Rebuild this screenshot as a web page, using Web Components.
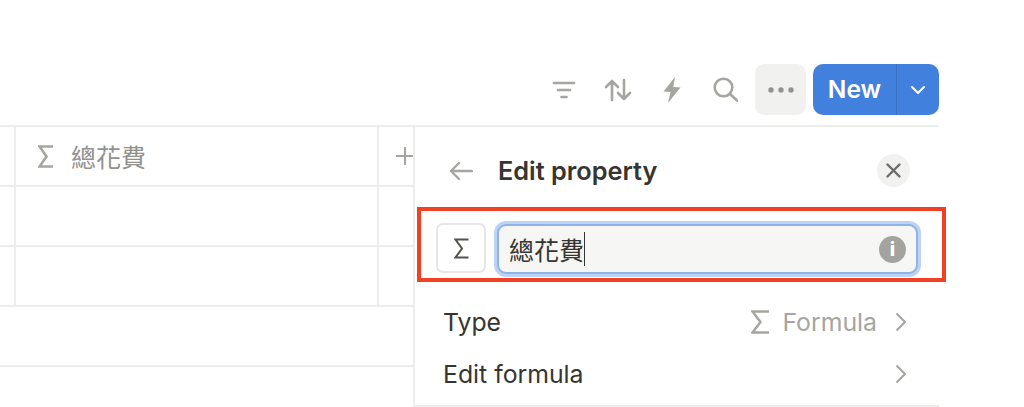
<!DOCTYPE html>
<html>
<head>
<meta charset="utf-8">
<title>Edit property</title>
<style>
  body {
    margin: 0;
    background: white;
    font-family: Inter, "Noto Sans CJK TC", sans-serif;
    overflow: hidden;
  }
</style>
</head>
<body>
<notion-page>
  <db-toolbar slot="toolbar"></db-toolbar>
  <db-table slot="table"></db-table>
  <edit-panel slot="panel"></edit-panel>
</notion-page>

<script>
// notion-page.js
class NotionPage extends HTMLElement {
  constructor(){
    super();
    const shadowRoot = this.attachShadow({mode: 'open'});
    shadowRoot.innerHTML = `
    <style>
      :host {
        display: block;
        height: 407px;
        width: 939px;
      }
      .main {
        border-top: 2px solid #ededec;
        display: grid;
        grid-template-columns: 413px 526px;
        height: 280px;
      }
    </style>
    <slot name="toolbar"></slot>
    <div class="main">
      <slot name="table"></slot>
      <slot name="panel"></slot>
    </div>
    `;
  }
}

// db-toolbar.js
class DbToolbar extends HTMLElement {
  constructor(){
    super();
    const shadowRoot = this.attachShadow({mode: 'open'});
    shadowRoot.innerHTML = `
    <style>
      :host {
        align-items: flex-start;
        box-sizing: border-box;
        display: flex;
        height: 125px;
        justify-content: flex-end;
        padding-top: 64px;
      }
      svg {
        fill: none;
        stroke: #a5a5a1;
        stroke-linecap: round;
        stroke-linejoin: round;
        stroke-width: 2.6;
      }
      .icon {
        align-items: center;
        display: flex;
        height: 51px;
        justify-content: center;
      }
      .more {
        background: #f1f1f0;
        border-radius: 9px;
        margin-left: 16px;
        width: 51px;
      }
      .new {
        background: #4280de;
        border-radius: 10px;
        color: white;
        display: flex;
        font-size: 24.500px;
        font-weight: 600;
        height: 51px;
        line-height: 51px;
        margin-left: 7px;
        width: 126px;
      }
      .new span {
        border-right: 1px solid #3a70c2;
        box-sizing: border-box;
        text-align: center;
        width: 84px;
      }
      .new div {
        align-items: center;
        display: flex;
        flex: 1;
        justify-content: center;
      }
    </style>
    <div class="icon" style="width:24px;margin-right:28px">
      <svg width="24" height="20" viewBox="0 0 24 20"><path d="M2 3h20M6 10h12M9.500 17h5"/></svg>
    </div>
    <div class="icon" style="width:28px;margin-right:31px">
      <svg width="28" height="24" viewBox="0 0 28 24"><path d="M8 22V3M2 9l6-6 6 6M20 2v19M14 15l6 6 6-6"/></svg>
    </div>
    <div class="icon" style="width:18px;margin-right:32px">
      <svg width="18" height="26" viewBox="0 0 18 26"><path style="fill:#a5a5a1;stroke:none" d="M12 0 0.500 14.500 7.500 15 5 26 17.500 10.500 10.300 10z"/></svg>
    </div>
    <div class="icon" style="width:26px">
      <svg width="26" height="26" viewBox="0 0 26 26"><circle cx="10.500" cy="10.500" r="8.800"/><path d="M17 17l7 6.500"/></svg>
    </div>
    <div class="icon more">
      <svg width="26" height="6" viewBox="0 0 26 6"><g style="fill:#93938f;stroke:none"><circle cx="3" cy="3" r="2.700"/><circle cx="13" cy="3" r="2.700"/><circle cx="23" cy="3" r="2.700"/></g></svg>
    </div>
    <div class="new">
      <span>New</span>
      <div><svg width="16" height="10" viewBox="0 0 16 10" style="stroke:white;stroke-width:2"><path d="M2 2l6 6 6-6"/></svg></div>
    </div>
    `;
  }
}

// db-table.js
class DbTable extends HTMLElement {
  constructor(){
    super();
    const shadowRoot = this.attachShadow({mode: 'open'});
    shadowRoot.innerHTML = `
    <style>
      :host {
        display: block;
      }
      .row {
        border-bottom: 2px solid #ededec;
        box-sizing: border-box;
        display: grid;
        grid-template-columns: 16px 363px 1fr;
        height: 60px;
      }
      .row > div {
        border-right: 2px solid #ededec;
      }
      .row > div:last-child {
        border-right: none;
      }
      .empty {
        border-bottom: 2px solid #ededec;
        box-sizing: border-box;
        height: 60px;
      }
      .title {
        align-items: center;
        color: #91918e;
        display: flex;
        font-family: "Noto Sans CJK TC", sans-serif;
        font-size: 25px;
      }
      .title svg {
        margin-left: 22px;
        margin-right: 18px;
      }
      .plus {
        align-items: center;
        display: flex;
        justify-content: flex-end;
      }
    </style>
    <div class="row">
      <div></div>
      <div class="title">
        <svg width="15" height="23" viewBox="0 0 15 23" fill="none" stroke="#a5a5a1" stroke-width="2.600"><path d="M15 1.500H1.500L8.500 11.500 1.500 21.500H15"/></svg>
        <span>總花費</span>
      </div>
      <div class="plus">
        <svg width="18" height="18" viewBox="0 0 18 18" stroke="#a5a5a1" stroke-width="2" style="margin-right:-1px"><path d="M9 0v18M0 9h18"/></svg>
      </div>
    </div>
    <div class="row"><div></div><div></div><div></div></div>
    <div class="row"><div></div><div></div><div></div></div>
    <div class="empty"></div>
    `;
  }
}

// prop-row.js
class PropRow extends HTMLElement {
  constructor(){
    super();
    const shadowRoot = this.attachShadow({mode: 'open'});
    shadowRoot.innerHTML = `
    <style>
      :host {
        align-items: center;
        color: #37352f;
        display: flex;
        font-size: 24.800px;
        height: 52px;
        padding-left: 28px;
        padding-right: 33px;
      }
      .label {
        flex: 1;
      }
      .value {
        align-items: center;
        color: #a5a5a1;
        display: flex;
        margin-right: 18px;
      }
      svg {
        fill: none;
        stroke: #a5a5a1;
      }
    </style>
    <span class="label"><slot></slot></span>
    <span class="value"><slot name="value"></slot></span>
    <svg width="11" height="20" viewBox="0 0 11 20" stroke-width="2"><path d="M1.500 1.500 10 10 1.500 18.500"/></svg>
    `;
  }
}

// edit-panel.js
class EditPanel extends HTMLElement {
  constructor(){
    super();
    const shadowRoot = this.attachShadow({mode: 'open'});
    shadowRoot.innerHTML = `
    <style>
      :host {
        border-bottom: 2px solid #ededec;
        border-left: 2px solid #ededec;
        box-sizing: border-box;
        display: block;
        height: 280px;
        position: relative;
      }
      .head {
        align-items: center;
        display: flex;
        height: 87px;
        padding-left: 34px;
      }
      .head b {
        color: #37352f;
        flex: 1;
        font-size: 25.300px;
        font-weight: 600;
        margin-left: 25px;
      }
      .close {
        align-items: center;
        background: #f1f1f0;
        border-radius: 50%;
        display: flex;
        height: 33px;
        justify-content: center;
        margin-right: 29px;
        width: 33px;
      }
      .name {
        display: flex;
        gap: 11px;
        height: 48px;
        padding-left: 21px;
        padding-right: 21px;
        padding-top: 9px;
      }
      .pick {
        align-items: center;
        border: 2px solid #e6e6e4;
        border-radius: 7px;
        box-sizing: border-box;
        display: flex;
        flex: none;
        height: 50px;
        justify-content: center;
        width: 50px;
      }
      .field {
        align-items: center;
        background: #f6f6f4;
        border: 2px solid #8fb3e8;
        border-radius: 9px;
        box-shadow: 0 0 0 3px #bcd3f3;
        box-sizing: border-box;
        color: #37352f;
        display: flex;
        flex: 1;
        font-family: "Noto Sans CJK TC", sans-serif;
        font-size: 25px;
        height: 50px;
        margin-top: 1px;
        padding: 0 10px 0 10px;
      }
      .field span {
        border-right: 1px solid #37352f;
        flex: none;
        line-height: 34px;
      }
      .info {
        align-items: center;
        background: #a3a39f;
        border-radius: 50%;
        color: white;
        display: flex;
        font-family: Inter, sans-serif;
        font-size: 19px;
        font-weight: 800;
        height: 27px;
        justify-content: center;
        margin-left: auto;
        width: 27px;
      }
      .rows {
        padding-top: 25px;
      }
      .flag {
        border: 4px solid #f04124;
        box-sizing: border-box;
        height: 75px;
        left: 2px;
        pointer-events: none;
        position: absolute;
        top: 80px;
        width: 529px;
      }
    </style>
    <div class="head">
      <svg width="24" height="20" viewBox="0 0 24 20" fill="none" stroke="#a5a5a1" stroke-width="2.400" stroke-linecap="round" stroke-linejoin="round"><path d="M23 10H2M10 2l-8 8 8 8"/></svg>
      <b>Edit property</b>
      <div class="close">
        <svg width="15" height="15" viewBox="0 0 15 15" stroke="#6c6c68" stroke-width="2.400" stroke-linecap="round"><path d="M1.500 1.500l12 12M13.500 1.500l-12 12"/></svg>
      </div>
    </div>
    <div class="name">
      <div class="pick">
        <svg width="15" height="21" viewBox="0 0 15 21" fill="none" stroke="#55534e" stroke-width="2"><path d="M14.500 1.500H1.500L8 10.500 1.500 19.500H14.500"/></svg>
      </div>
      <div class="field">
        <span>總花費</span>
        <div class="info">i</div>
      </div>
    </div>
    <div class="rows">
      <prop-row>Type
        <svg slot="value" width="18" height="24" viewBox="0 0 18 24" fill="none" stroke="#a5a5a1" stroke-width="2.400" style="margin-right:13px"><path d="M18 1.500H1.500L9.500 12 1.500 22.500H18"/></svg>
        <span slot="value">Formula</span>
      </prop-row>
      <prop-row>Edit formula</prop-row>
    </div>
    <div class="flag"></div>
    `;
  }
}

customElements.define('prop-row', PropRow);
customElements.define('db-toolbar', DbToolbar);
customElements.define('db-table', DbTable);
customElements.define('edit-panel', EditPanel);
customElements.define('notion-page', NotionPage);
</script>
</body>
</html>
